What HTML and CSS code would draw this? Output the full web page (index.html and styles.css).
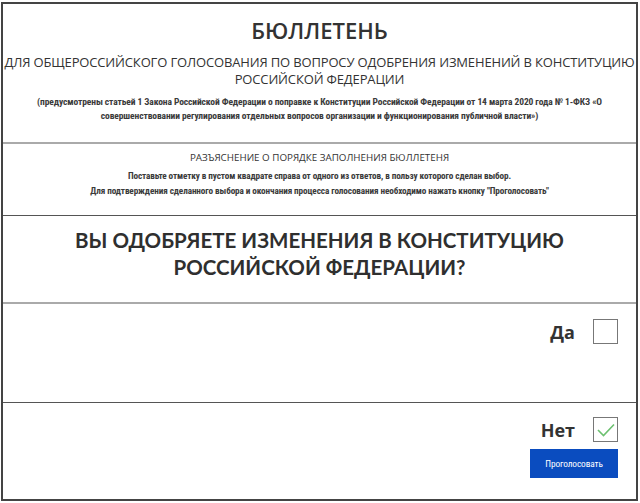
FILE: index.html
```html
<!DOCTYPE html>
<html lang="ru">
<head>
<meta charset="utf-8">
<link rel="stylesheet" href="styles.css">
</head>
<body>
<div class="ballot">
  <section class="head">
    <h1 class="title">БЮЛЛЕТЕНЬ</h1>
    <p class="subtitle">ДЛЯ ОБЩЕРОССИЙСКОГО ГОЛОСОВАНИЯ ПО ВОПРОСУ ОДОБРЕНИЯ ИЗМЕНЕНИЙ В КОНСТИТУЦИЮ<br>РОССИЙСКОЙ ФЕДЕРАЦИИ</p>
    <p class="note">(предусмотрены статьей 1 Закона Российской Федерации о поправке к Конституции Российской Федерации от 14 марта 2020 года № 1-ФКЗ «О<br>совершенствовании регулирования отдельных вопросов организации и функционирования публичной власти»)</p>
  </section>
  <section class="explain">
    <p class="explain-title">РАЗЪЯСНЕНИЕ О ПОРЯДКЕ ЗАПОЛНЕНИЯ БЮЛЛЕТЕНЯ</p>
    <p class="explain-text">Поставьте отметку в пустом квадрате справа от одного из ответов, в пользу которого сделан выбор.</p>
    <p class="explain-text">Для подтверждения сделанного выбора и окончания процесса голосования необходимо нажать кнопку "Проголосовать"</p>
  </section>
  <section class="question">
    <h2 class="q-text">ВЫ ОДОБРЯЕТЕ ИЗМЕНЕНИЯ В КОНСТИТУЦИЮ<br>РОССИЙСКОЙ ФЕДЕРАЦИИ?</h2>
  </section>
  <section class="answer answer-yes">
    <div class="option">
      <span class="opt-label">Да</span>
      <span class="box"></span>
    </div>
  </section>
  <section class="answer answer-no">
    <div class="option">
      <span class="opt-label">Нет</span>
      <span class="box">
        <svg width="20" height="16" viewBox="0 0 20 16"><path d="M2 8 L7.5 13.5 L18 2.5" fill="none" stroke="#6cc070" stroke-width="1.6"/></svg>
      </span>
    </div>
    <button class="vote">Проголосовать</button>
  </section>
</div>
</body>
</html>
```
FILE: styles.css
```css
* { box-sizing: border-box; margin: 0; padding: 0; }
html, body { background: #fff; }
body { width: 640px; height: 503px; padding: 2px 2px 2px 1px; font-family: "Open Sans", "Liberation Sans", sans-serif; color: #333; }
.ballot {
  width: 637px;
  height: 499px;
  border: 2px solid #444;
  display: flex;
  flex-direction: column;
}
.head {
  height: 140px;
  flex: none;
  border-bottom: 2px solid #aaa;
  text-align: center;
  padding-top: 11px;
  white-space: nowrap;
}
.title { font-size: 22px; font-weight: 600; line-height: 30px; color: #333; }
.subtitle { font-size: 13px; font-weight: 400; line-height: 17px; margin-top: 9px; letter-spacing: -0.15px; }
.note {
  font-family: "Roboto Condensed", Roboto, "Liberation Sans", sans-serif;
  font-size: 9.5px; font-weight: 700; line-height: 14px; margin-top: 7px; color: #3a3a3a;
  letter-spacing: -0.1px;
}
.explain {
  height: 72px;
  flex: none;
  border-bottom: 1px solid #555;
  text-align: center;
  padding-top: 7px;
  white-space: nowrap;
}
.explain-title { font-size: 9.8px; line-height: 14px; color: #333; }
.explain-text {
  font-family: "Roboto Condensed", Roboto, "Liberation Sans", sans-serif;
  font-size: 9.2px; font-weight: 700; line-height: 15px; color: #3a3a3a;
  letter-spacing: -0.1px;
}
.explain-title + .explain-text { margin-top: 2.5px; }
.question {
  height: 88px;
  flex: none;
  border-bottom: 2px solid #aaa;
  text-align: center;
  padding-top: 11px;
}
.q-text { font-family: Lato, "Open Sans", sans-serif; font-size: 20.5px; font-weight: 700; line-height: 27px; color: #2f2f2f; }
.answer { padding-right: 18px; display: flex; flex-direction: column; align-items: flex-end; }
.answer-yes { height: 99px; flex: none; border-bottom: 1px solid #555; padding-top: 15px; }
.answer-no { flex: 1; padding-top: 14px; }
.option { display: flex; align-items: center; gap: 18px; }
.opt-label { font-size: 18px; font-weight: 700; color: #333; line-height: 24px; }
.box { width: 25px; height: 25px; border: 1px solid #777; display: flex; align-items: center; justify-content: center; }
.vote {
  margin-top: 7px;
  width: 88px; height: 29px;
  background: #0a4cbf; color: #fff; border: none;
  font-family: "Roboto Condensed", Roboto, "Liberation Sans", sans-serif;
  font-size: 9.3px;
  letter-spacing: -0.1px;
}
```
